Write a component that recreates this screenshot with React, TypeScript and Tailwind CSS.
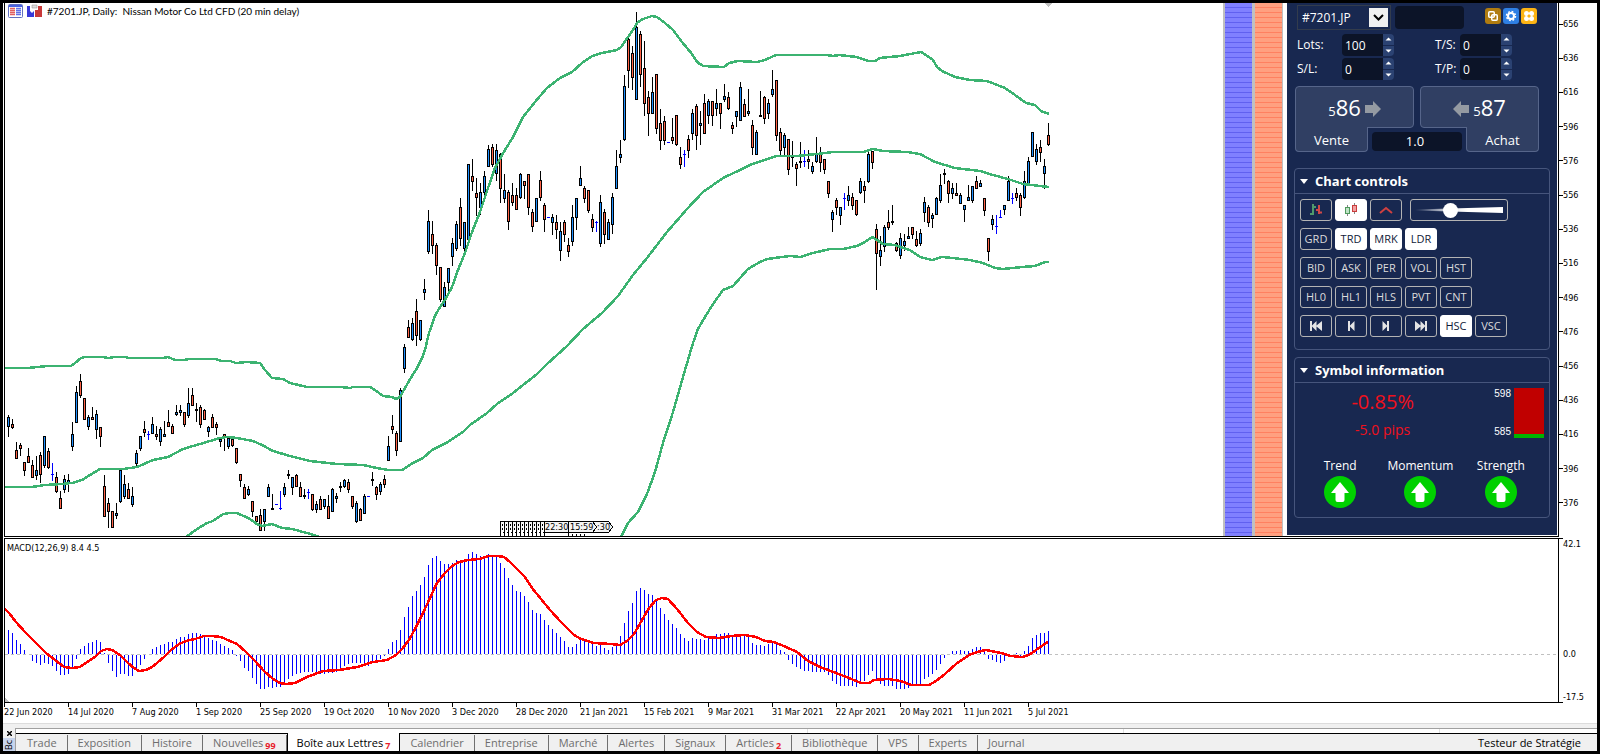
import { useState } from "react";
import type { ReactNode } from "react";

// high, body top, body bottom, low, kind (u = up, d = down, k = doji, b = no change)
const CANDLES = `
415 417 427 437 u;419 424 428 429 d;442 450 459 459 d;443 445 449 456 d;462 462 471 476 d;448 456 463 463 d;
460 465 478 478 d;456 470 476 480 u;452 455 475 483 d;436 436 466 468 u;448 451 468 469 d;463 474 475 481 b;
472 477 492 493 d;491 498 509 509 d;475 479 490 493 u;474 480 484 492 u;422 434 447 451 u;386 392 423 423 u;
374 381 396 398 d;398 398 420 420 d;415 417 427 430 u;407 417 420 420 d;410 414 430 439 u;427 427 437 447 d;
475 486 517 517 d;498 503 512 528 d;511 511 528 528 d;503 513 516 519 u;470 470 502 503 u;475 484 497 499 u;
483 489 499 499 d;487 496 505 507 u;450 453 464 468 u;436 436 449 451 u;421 429 433 437 d;431 434 435 440 b;
417 424 434 434 u;426 434 437 440 d;427 429 442 446 u;421 434 437 437 u;410 422 427 427 d;424 426 434 434 d;
405 412 415 416 u;405 410 413 416 u;412 412 425 427 d;388 403 416 418 u;388 395 406 406 d;403 409 411 422 k;
405 407 425 428 d;409 410 420 420 d;426 427 432 437 u;414 417 428 428 d;422 424 428 435 d;437 439 442 447 u;
434 434 438 451 d;437 438 447 449 u;439 439 446 447 d;448 448 463 464 d;474 474 481 487 d;484 487 499 499 d;
486 489 495 496 u;501 501 512 517 d;516 516 522 522 d;509 515 531 531 d;509 509 522 531 u;484 487 497 497 u;
494 508 510 510 k;504 504 505 505 b;491 508 509 510 b;483 487 495 497 u;470 474 476 479 k;477 477 488 495 u;
474 475 487 487 d;482 487 497 497 d;489 495 497 499 u;489 492 493 499 b;494 494 510 511 d;501 504 510 513 u;
496 499 510 510 d;499 499 507 509 u;495 506 519 519 d;488 489 512 512 u;493 496 499 503 u;482 486 488 492 k;
479 480 487 488 u;479 482 490 493 d;496 496 507 509 d;501 503 522 523 u;508 509 521 521 d;494 496 514 514 u;
496 496 497 497 b;472 479 481 486 k;486 487 495 500 d;482 484 492 495 u;475 479 485 488 d;436 446 461 461 u;
415 426 430 434 d;431 433 451 456 d;388 390 442 442 u;344 347 369 373 u;320 327 338 338 d;318 323 340 341 u;
299 311 336 346 d;320 320 340 341 u;279 289 293 300 u;210 221 252 254 u;221 234 246 254 d;243 245 266 275 d;
267 267 300 302 d;282 287 307 307 u;268 268 283 292 u;238 243 257 266 u;221 224 249 251 u;198 207 239 246 d;
222 222 249 252 u;164 164 240 240 u;159 176 182 191 d;178 193 198 216 d;183 192 208 215 u;171 176 193 199 u;
145 149 167 167 u;144 147 165 167 d;144 150 174 181 u;153 154 189 203 d;174 190 199 203 u;190 192 222 230 d;
183 195 203 206 d;188 195 210 210 d;173 174 198 199 u;181 181 186 199 d;174 174 208 215 d;209 212 227 232 d;
198 198 222 222 u;171 180 198 201 d;203 205 220 232 d;217 217 218 218 b;214 217 223 235 u;215 222 230 239 d;
222 231 251 261 u;220 222 235 242 d;238 245 252 257 d;205 217 242 246 u;198 198 218 230 u;166 178 186 186 u;
186 188 199 203 d;190 190 211 213 d;214 219 228 232 d;221 222 223 232 b;195 202 244 247 u;209 212 235 244 d;
219 222 240 240 u;193 197 225 234 u;150 166 189 189 u;140 154 158 163 u;75 86 140 141 u;37 39 71 88 d;
46 53 78 90 d;12 27 100 100 u;31 34 75 87 d;41 68 104 116 d;91 97 114 136 d;77 92 114 114 u;
74 74 129 134 d;109 123 141 150 d;116 121 141 145 d;142 142 143 143 b;118 137 141 144 d;115 115 145 146 d;
147 157 165 169 d;150 154 155 167 b;135 139 151 158 d;109 113 134 140 u;104 106 136 150 d;111 123 126 145 u;
94 103 134 134 d;99 101 116 124 u;101 101 116 126 d;89 103 109 116 u;103 103 114 129 d;84 96 100 102 u;
92 97 109 110 d;122 125 129 134 d;111 111 117 127 u;82 87 121 121 u;99 104 117 117 d;89 111 114 116 u;
120 125 148 155 d;130 132 155 155 u;91 115 117 117 k;96 97 119 124 d;99 103 114 119 u;70 89 95 97 u;
80 80 136 141 d;128 132 151 155 d;133 135 148 156 u;139 139 170 175 d;141 157 158 167 k;162 164 169 186 d;
142 161 163 168 k;150 161 162 167 b;150 159 162 169 d;162 166 172 174 u;137 154 162 163 u;147 154 163 172 d;
159 159 170 174 d;181 181 194 198 d;210 212 220 232 u;198 200 208 215 d;207 207 216 225 u;193 198 199 210 b;
186 195 201 206 u;193 197 206 210 d;200 200 215 216 d;178 181 193 194 u;181 186 191 203 d;151 154 182 183 u;
151 151 163 169 d;224 229 254 290 d;236 250 257 266 u;225 227 247 252 u;210 222 228 230 d;205 221 223 225 k;
242 243 251 252 d;233 238 256 259 u;234 241 246 251 u;227 236 239 239 u;227 227 235 239 d;231 239 246 247 d;
229 233 244 246 u;197 202 213 222 u;205 207 223 227 d;213 215 219 228 u;197 198 215 215 u;174 185 201 203 u;
169 173 175 184 k;180 181 194 203 d;183 188 194 199 u;183 193 196 196 d;193 195 204 204 u;205 205 210 222 u;
185 197 201 201 u;186 186 201 203 u;176 181 189 189 d;180 183 187 187 u;198 198 211 216 d;238 238 252 261 d;
215 219 225 230 u;215 226 227 234 b;210 217 218 218 b;205 205 210 215 u;176 181 201 201 u;193 198 199 204 b;
188 193 198 201 d;193 195 208 216 d;171 181 198 199 u;157 161 184 184 u;132 132 157 157 u;144 149 162 165 u;
140 147 153 162 d;159 166 174 189 u;123 135 145 146 d`
  .trim()
  .split(";")
  .map((row) => {
    const [high, top, bottom, low, kind] = row.trim().split(" ");
    return { high: +high, top: +top, bottom: +bottom, low: +low, kind };
  });

const UPPER_BAND =
  "5,368 28,368 47,366 71,366 75,363 81,358 85,357 103,357 108,358 115,357 125,357 129,358 163,358 168,357 175,360 183,360 190,359 215,359 222,361 230,361 236,363 247,362 260,363 265,370 272,378 283,379 290,383 307,387 340,387 350,388 353,387 370,387 375,390 383,396 392,397 396,399 400,397 405,388 412,376 417,368 422,358 425,350 429,333 435,316 440,307 445,300 452,287 458,270 465,253 472,232 480,212 488,188 495,168 502,155 513,137 523,117 535,102 547,88 560,78 572,72 582,63 592,56 602,53 617,50 621,47 628,37 633,30 637,23 643,19 652,16 657,17 665,23 673,30 682,42 692,54 697,62 703,66 724,67 729,63 738,61 757,62 765,60 776,55 827,55 833,56 839,55 857,57 868,61 875,61 880,58 900,56 921,52 933,60 937,67 942,71 955,77 970,80 987,81 1005,88 1015,95 1026,103 1035,105 1041,111 1049,114";
const MIDDLE_BAND =
  "5,487 32,487 45,485 62,484 72,483 82,480 90,475 100,469 123,469 137,467 153,460 168,457 183,449 200,444 220,438 227,437 237,438 253,441 262,445 273,451 290,456 310,461 337,464 363,465 377,468 388,470 402,470 413,463 423,458 432,450 448,442 463,432 470,425 487,413 497,404 513,393 537,374 547,364 567,346 583,329 602,313 618,296 633,275 647,258 667,232 687,209 703,192 723,178 740,170 752,164 777,156 797,156 817,154 833,152 863,152 873,149 883,151 907,152 920,154 935,162 955,168 980,171 993,175 1008,179 1023,184 1049,187";
const LOWER_BAND =
  "186,537 197,529 207,523 213,521 223,514 230,513 237,513 248,518 257,524 262,526 272,524 282,528 292,529 307,533 320,537";
const LOWER_BAND_2 =
  "621,537 628,523 638,512 647,494 655,472 663,443 673,412 685,370 693,343 698,329 705,317 713,304 723,290 733,286 748,269 760,262 767,259 782,257 790,256 800,257 813,253 830,249 843,249 857,246 865,242 872,237 877,240 883,244 895,245 900,247 910,250 920,257 932,260 942,257 953,258 970,260 983,263 995,268 1003,269 1022,267 1035,266 1045,262 1049,262";

const MACD = [
  24, 21, 14, 10, 4, 0, -6, -8, -10, -8, -9, -11, -16, -20, -20, -19, -12, -4, 5, 8, 11, 12, 14, 12, 1, -8, -16, -22,
  -19, -19, -21, -21, -16, -10, -4, 0, 5, 7, 9, 10, 12, 12, 15, 17, 17, 20, 21, 21, 20, 18, 16, 14, 13, 10, 8, 6, 4,
  -1, -6, -13, -16, -23, -29, -34, -34, -32, -33, -32, -32, -29, -24, -21, -19, -18, -17, -17, -17, -18, -19, -19, -18,
  -18, -17, -14, -11, -9, -8, -8, -8, -10, -11, -6, -5, -4, -1, 5, 12, 14, 24, 37, 47, 58, 63, 69, 77, 89, 96, 98, 93,
  90, 90, 91, 94, 94, 93, 100, 102, 100, 98, 98, 100, 99, 98, 91, 86, 76, 69, 63, 62, 58, 52, 44, 41, 40, 34, 29, 25,
  21, 17, 13, 7, 7, 10, 14, 13, 12, 11, 8, 10, 6, 4, 7, 11, 18, 31, 43, 51, 63, 66, 64, 60, 59, 53, 46, 40, 34, 30, 26,
  20, 16, 13, 16, 15, 15, 14, 17, 18, 20, 20, 21, 21, 18, 18, 19, 19, 18, 11, 9, 9, 8, 10, 12, 10, 4, 2, -5, -9, -12,
  -14, -16, -16, -17, -17, -17, -17, -20, -26, -29, -31, -31, -31, -31, -32, -29, -26, -20, -16, -24, -29, -31, -31,
  -31, -34, -34, -34, -33, -31, -31, -30, -24, -22, -19, -15, -9, -3, 0, 3, 3, 4, 3, 3, 5, 7, 7, 5, -4, -5, -7, -8, -6,
  -1, -1, 1, -1, 3, 8, 16, 19, 21, 21, 23,
];

const SIGNAL =
  "5,609 9,613 16,622 25,632 36,643 46,653 55,660 64,667 72,668 80,667 87,662 95,657 101,651 107,649 112,650 120,655 127,662 134,668 139,671 146,670 152,667 157,663 164,657 171,650 179,644 186,641 195,639 204,636 212,636 221,637 230,641 237,644 246,652 255,661 264,671 273,679 280,683 286,684 295,683 307,677 323,671 339,670 357,667 373,662 387,660 396,655 402,649 409,640 416,627 423,613 430,598 437,583 445,573 452,566 459,562 468,560 479,559 489,556 498,556 504,557 511,563 518,570 525,577 532,588 541,599 550,610 561,622 574,635 581,639 594,643 611,644 620,645 627,641 634,634 642,620 649,608 656,600 662,598 668,599 677,609 688,623 697,632 706,637 719,638 731,636 745,635 756,637 765,641 774,642 786,647 797,652 808,661 820,667 836,673 849,678 861,683 869,683 874,680 888,679 901,681 911,685 929,685 936,681 945,674 956,664 969,655 977,652 986,650 1001,653 1011,656 1022,657 1029,655 1036,650 1048,642";

const PRICES = [656, 636, 616, 596, 576, 556, 536, 516, 496, 476, 456, 436, 416, 396, 376];

const DATES = [
  "22 Jun 2020",
  "14 Jul 2020",
  "7 Aug 2020",
  "1 Sep 2020",
  "25 Sep 2020",
  "19 Oct 2020",
  "10 Nov 2020",
  "3 Dec 2020",
  "28 Dec 2020",
  "21 Jan 2021",
  "15 Feb 2021",
  "9 Mar 2021",
  "31 Mar 2021",
  "22 Apr 2021",
  "20 May 2021",
  "11 Jun 2021",
  "5 Jul 2021",
];

const TABS: { label: string; badge?: string }[] = [
  { label: "Trade" },
  { label: "Exposition" },
  { label: "Histoire" },
  { label: "Nouvelles", badge: "99" },
  { label: "Boîte aux Lettres", badge: "7" },
  { label: "Calendrier" },
  { label: "Entreprise" },
  { label: "Marché" },
  { label: "Alertes" },
  { label: "Signaux" },
  { label: "Articles", badge: "2" },
  { label: "Bibliothèque" },
  { label: "VPS" },
  { label: "Experts" },
  { label: "Journal" },
];

function PriceChart() {
  return (
    <svg className="block h-[533px] min-w-0 flex-1" shapeRendering="crispEdges" aria-label="Price chart">
      <g transform="translate(-5 -3)">
        {CANDLES.map((c, i) => {
          const x = 8 + i * 4;
          if (c.kind === "b") {
            return (
              <g key={i} fill="#0000ff">
                <rect x={x} y={c.high} width={1} height={c.low - c.high} />
                <rect x={x - 1} y={c.top} width={3} height={1} />
              </g>
            );
          }
          const h = c.bottom - c.top;
          return (
            <g key={i}>
              <rect x={x} y={c.high} width={1} height={c.low - c.high} fill="#000" />
              <rect x={x - 1} y={c.top} width={3} height={h} fill="#000" />
              {c.kind !== "k" && h > 2 && (
                <rect x={x} y={c.top + 1} width={1} height={h - 2} fill={c.kind === "u" ? "#1e90ff" : "#ff6347"} />
              )}
            </g>
          );
        })}
        <g fill="none" stroke="#3cb371" strokeWidth={2.5}>
          <polyline points={UPPER_BAND} />
          <polyline points={MIDDLE_BAND} />
          <polyline points={LOWER_BAND} />
          <polyline points={LOWER_BAND_2} />
        </g>
        <path d="M1044 3h9l-4.500 4z" fill="#c0c0c0" />

        {/* session time tags */}
        <g
          className="font-['DejaVu_Sans_Condensed',sans-serif] text-[9px]"
          fill="#f4f4f4"
          stroke="#000"
          strokeWidth={1}
        >
          {Array.from({ length: 11 }, (_, i) => (
            <path key={i} d={`M${500.5 + i * 4} 536V521.500h4`} />
          ))}
          {Array.from({ length: 11 }, (_, i) => (
            <path key={i} d={`M${502.5 + i * 4} 524v2M${502.5 + i * 4} 528v2M${502.5 + i * 4} 532h2`} />
          ))}
          <path d="M544.500 536V521.500H608.500L612.500 527L608.500 532.500H544.500" />
          <text x={545} y={530} fill="#000" stroke="none">
            22:30
          </text>
          <text x={597} y={530} fill="#000" stroke="none">
            :30
          </text>
          <path d="M568.500 536V521.500H592.500L596.500 527L592.500 532.500H568.500" />
          <text x={570} y={530} fill="#000" stroke="none">
            15:59
          </text>
          <path d="M572.500 534v3M576.500 534v3M580.500 534v3M584.500 534v3" />
        </g>
      </g>
    </svg>
  );
}

function MacdChart() {
  return (
    <svg className="block h-[163px] w-full" shapeRendering="crispEdges" aria-label="MACD">
      <line x1={0} x2="100%" y1={115.5} y2={115.5} stroke="#c0c0c0" strokeDasharray="3 3" />
      <g transform="translate(-5 -539)">
        {MACD.map((v, i) => (
          <rect key={i} x={8 + i * 4} y={v > 0 ? 654 - v : 655} width={1} height={Math.abs(v)} fill="#0000ff" />
        ))}
        <polyline points={SIGNAL} fill="none" stroke="#ff0000" strokeWidth={2.5} />
        <path d="M5 698v4h4z" fill="#c0c0c0" />
      </g>
    </svg>
  );
}

function DepthBands() {
  return (
    <div className="flex w-[60px] gap-[3px] border-l-2 border-[#c0c0c0] bg-[#c0c0c0] pr-px">
      <div className="flex-1 bg-[repeating-linear-gradient(180deg,#8080ff_0px,#8080ff_4px,#6060f0_4px,#6060f0_5px)]" />
      <div className="flex-1 bg-[repeating-linear-gradient(180deg,#ffa080_0px,#ffa080_4px,#ff8060_4px,#ff8060_5px)]" />
    </div>
  );
}

function NumberField({ label, value }: { label: string; value: string }) {
  const [text, setText] = useState(value);
  const step = (by: number) => setText(String(Math.max(0, Number(text) + by)));
  return (
    <label className="flex h-[22px] items-center text-xs">
      <span className="w-[45px] group-last:w-[25px]">{label}</span>
      <span className="flex h-full overflow-hidden rounded">
        <input
          value={text}
          onChange={(e) => setText(e.target.value)}
          className="h-full w-[41px] bg-[#0c1428] pl-[3px] text-xs text-white outline-none"
        />
        <span className="flex w-[11px] flex-col gap-px">
          <button
            type="button"
            aria-label="Increase"
            onClick={() => step(1)}
            className="flex flex-1 items-center justify-center bg-[#2b4272]"
          >
            <svg width="7" height="4" viewBox="0 0 7 4" fill="#fff">
              <path d="M.5 3.500 3.500.5l3 3z" />
            </svg>
          </button>
          <button
            type="button"
            aria-label="Decrease"
            onClick={() => step(-1)}
            className="flex flex-1 items-center justify-center bg-[#2b4272]"
          >
            <svg width="7" height="4" viewBox="0 0 7 4" fill="#fff">
              <path d="M.5.5h6l-3 3z" />
            </svg>
          </button>
        </span>
      </span>
    </label>
  );
}

function ArrowIcon({ left }: { left?: boolean }) {
  return (
    <svg className="mt-1" width="16" height="16" viewBox="0 0 16 16" fill="#949aa2">
      {left ? <path d="M0 8 8 0v4h8v8H8v4z" /> : <path d="M16 8 8 0v4H0v8h8v4z" />}
    </svg>
  );
}

function TradeBox() {
  return (
    <div className="relative mt-[6px] ml-[1px] flex gap-[6px]">
      <button type="button" className="flex w-[119px] flex-col text-left">
        <span className="flex h-[42px] w-full items-center justify-center gap-1 rounded-t rounded-br border border-[#56658a] bg-[#303f63]">
          <span className="text-[22px] leading-none">
            <span className="text-[13px]">5</span>86
          </span>
          <ArrowIcon />
        </span>
        <span className="-mt-px flex h-[25px] w-[73px] justify-center rounded-b border border-t-0 border-[#56658a] bg-[#303f63] pt-[4px] text-[13px] leading-[18px]">
          Vente
        </span>
      </button>
      <button type="button" className="flex w-[119px] flex-col items-end text-left">
        <span className="flex h-[42px] w-full items-center justify-center gap-1 rounded-t rounded-bl border border-[#56658a] bg-[#303f63]">
          <ArrowIcon left />
          <span className="text-[22px] leading-none">
            <span className="text-[13px]">5</span>87
          </span>
        </span>
        <span className="-mt-px flex h-[25px] w-[73px] justify-center rounded-b border border-t-0 border-[#56658a] bg-[#303f63] pt-[4px] text-[13px] leading-[18px]">
          Achat
        </span>
      </button>
      <input
        aria-label="Volume"
        defaultValue="1.0"
        className="absolute bottom-[1px] left-[77px] h-[19px] w-[90px] rounded bg-[#0c1428] pr-1 text-center text-[13px] text-white outline-none"
      />
    </div>
  );
}

function Group({ title, children }: { title: string; children: ReactNode }) {
  return (
    <section className="rounded border border-[#46557c]">
      <h2 className="flex h-[25px] items-center gap-[7px] border-b border-[#46557c] pt-px pl-[5px] text-[13px] font-bold">
        <svg width="8" height="5" viewBox="0 0 8 5" fill="#fff">
          <path d="M0 0h8L4 5z" />
        </svg>
        {title}
      </h2>
      {children}
    </section>
  );
}

function KeyButton({ on, label, children }: { on?: boolean; label?: string; children: ReactNode }) {
  return (
    <button
      type="button"
      aria-label={label}
      aria-pressed={!!on}
      className={
        "flex h-[22px] w-8 items-center justify-center rounded-[3px] border text-[11px] " +
        (on ? "border-white bg-white text-[#101a38]" : "border-[#b4b4b4] text-[#dcdcdc]")
      }
    >
      {children}
    </button>
  );
}

function SkipIcon({ kind }: { kind: "first" | "prev" | "next" | "last" }) {
  const flip = kind === "next" || kind === "last";
  const double = kind === "first" || kind === "last";
  return (
    <svg width="12" height="10" viewBox="0 0 12 10" fill="#e4e4e4">
      <g transform={flip ? "translate(12 0) scale(-1 1)" : undefined}>
        {double ? (
          <path d="M0 0h2v4.500L6.500 0v4.500L12 0v10L6.500 5.500V10L2 5.500V10H0z" />
        ) : (
          <path d="M3 0h2v4.500L9.500 0v10L5 5.500V10H3z" />
        )}
      </g>
    </svg>
  );
}

const KEY_ROWS = [
  ["GRD", "TRD", "MRK", "LDR"],
  ["BID", "ASK", "PER", "VOL", "HST"],
  ["HL0", "HL1", "HLS", "PVT", "CNT"],
];
const ACTIVE_KEYS = ["TRD", "MRK", "LDR"];

function ChartControls() {
  return (
    <Group title="Chart controls">
      <div className="flex flex-col gap-[7px] px-[5px] pt-[5px] pb-3">
        <div className="flex gap-[3px]">
          <KeyButton label="Bars">
            <svg width="14" height="14" viewBox="0 0 14 14" fill="none" strokeWidth="2">
              <path d="M4 1v11M4 4h3M1 11h3" stroke="#4f9a6c" />
              <path d="M10 2v9M7 7h3M10 9.500h3" stroke="#d04848" />
            </svg>
          </KeyButton>
          <KeyButton on label="Candles">
            <svg width="14" height="14" viewBox="0 0 14 14">
              <path d="M3.500 2v11M10.500 0v11" stroke="#333" strokeOpacity=".6" />
              <rect x="1.500" y="4.500" width="4" height="6" fill="#bfe3c6" stroke="#4f9a5c" />
              <rect x="8.500" y="2.500" width="4" height="6" fill="#f3a0a0" stroke="#c83c3c" />
            </svg>
          </KeyButton>
          <KeyButton label="Line">
            <svg width="14" height="8" viewBox="0 0 14 8" fill="none">
              <path d="M1 7l6-5 6 5" stroke="#d04040" strokeWidth="2" />
            </svg>
          </KeyButton>
          <div className="relative ml-[5px] flex h-[22px] w-[98px] items-center rounded-[3px] border border-[#b4b4b4] px-1">
            <svg className="absolute left-1 h-[6px] w-[88px]" viewBox="0 0 88 6" preserveAspectRatio="none">
              <defs>
                <linearGradient id="wedge">
                  <stop offset="0" stopColor="#fff" stopOpacity="0" />
                  <stop offset=".4" stopColor="#fff" stopOpacity=".9" />
                  <stop offset=".6" stopColor="#fff" />
                </linearGradient>
              </defs>
              <path d="M0 2.500 88 0v6L0 3.500z" fill="url(#wedge)" />
            </svg>
            <input
              type="range"
              aria-label="Zoom"
              defaultValue={38}
              className="relative h-[14px] w-full appearance-none bg-transparent [&::-webkit-slider-thumb]:size-[15px] [&::-webkit-slider-thumb]:appearance-none [&::-webkit-slider-thumb]:rounded-full [&::-webkit-slider-thumb]:bg-white"
            />
          </div>
        </div>
        {KEY_ROWS.map((row) => (
          <div key={row[0]} className="flex gap-[3px]">
            {row.map((k) => (
              <KeyButton key={k} on={ACTIVE_KEYS.includes(k)}>
                {k}
              </KeyButton>
            ))}
          </div>
        ))}
        <div className="flex gap-[3px]">
          <KeyButton label="First">
            <SkipIcon kind="first" />
          </KeyButton>
          <KeyButton label="Previous">
            <SkipIcon kind="prev" />
          </KeyButton>
          <KeyButton label="Next">
            <SkipIcon kind="next" />
          </KeyButton>
          <KeyButton label="Last">
            <SkipIcon kind="last" />
          </KeyButton>
          <KeyButton on>HSC</KeyButton>
          <KeyButton>VSC</KeyButton>
        </div>
      </div>
    </Group>
  );
}

function SymbolInformation() {
  return (
    <Group title="Symbol information">
      <div className="flex h-[60px] items-start pt-[5px] pr-[5px]">
        <div className="flex-1 pr-6 text-center text-[#f0101c]">
          <p className="text-xl leading-[28px]">-0.85%</p>
          <p className="text-sm leading-[28px]">-5.0 pips</p>
        </div>
        <div className="flex h-[50px] gap-[3px]">
          <div className="flex flex-col justify-between font-['Liberation_Sans',sans-serif] text-[10px] leading-[12px]">
            <span>598</span>
            <span>585</span>
          </div>
          <div className="flex w-[30px] flex-col">
            <div className="flex-1 bg-[#c00000]" />
            <div className="h-1 bg-[#00b400]" />
          </div>
        </div>
      </div>
      <div className="flex pt-[14px] pr-[8px] pb-[9px] pl-[5px] text-xs">
        {["Trend", "Momentum", "Strength"].map((name) => (
          <div key={name} className="flex flex-1 flex-col items-center gap-[2px]">
            <span className="leading-[17px]">{name}</span>
            <svg width="32" height="32" viewBox="0 0 32 32">
              <circle cx="16" cy="16" r="16" fill="#00d000" />
              <path d="M16 6 25 17h-4.500v7a2 2 0 0 1-2 2h-5a2 2 0 0 1-2-2v-7H7z" fill="#fff" strokeLinejoin="round" />
            </svg>
          </div>
        ))}
      </div>
    </Group>
  );
}

function TradePanel() {
  return (
    <aside className="mr-px mb-px ml-1 w-[270px] bg-[#182850] px-[7px] pt-[2px] font-['Open_Sans',sans-serif] text-white">
      <div className="flex h-[25px] items-center pl-[3px]">
        <div className="relative flex h-full w-[94px] items-center border border-[#333c4c]">
          <select
            aria-label="Symbol"
            className="h-full w-full appearance-none bg-transparent pl-1 text-xs text-white outline-none"
          >
            <option>#7201.JP</option>
          </select>
          <span className="pointer-events-none absolute right-[2px] flex size-[19px] items-center justify-center bg-[#f0f0f0]">
            <svg width="11" height="7" viewBox="0 0 11 7" fill="none" stroke="#000" strokeWidth="2">
              <path d="M1 1l4.500 4.500L10 1" />
            </svg>
          </span>
        </div>
        <input aria-label="Comment" className="ml-1 h-[23px] w-[69px] rounded bg-[#0c1428] px-1 text-xs outline-none" />
        <div className="ml-auto flex gap-[2px] self-start pt-[3px] pr-[13px]">
          <button type="button" aria-label="Copy" className="size-4 rounded-[3px] bg-[#b07c10]">
            <svg viewBox="0 0 16 16" fill="none" stroke="#fff" strokeWidth="1.500">
              <rect x="3.750" y="3.750" width="5.500" height="5.500" rx="1" />
              <rect x="6.750" y="6.750" width="5.500" height="5.500" rx="1" />
            </svg>
          </button>
          <button type="button" aria-label="Settings" className="size-4 rounded-[3px] bg-[#2f80e4]">
            <svg viewBox="0 0 16 16" fill="none" stroke="#fff">
              <circle cx="8" cy="8" r="3" strokeWidth="2" />
              <circle cx="8" cy="8" r="4.500" strokeWidth="1.500" strokeDasharray="1.800 1.734" />
            </svg>
          </button>
          <button type="button" aria-label="Layout" className="size-4 rounded-[3px] bg-[#fcb414]">
            <svg viewBox="0 0 16 16" fill="#fff">
              <circle cx="5.500" cy="5.500" r="2.500" />
              <circle cx="10.500" cy="5.500" r="2.500" />
              <circle cx="5.500" cy="10.500" r="2.500" />
              <circle cx="10.500" cy="10.500" r="2.500" />
              <circle cx="8" cy="8" r="1.500" fill="#fcb414" />
            </svg>
          </button>
        </div>
      </div>

      <div className="mt-1 flex gap-[41px] pl-[3px]">
        <div className="group flex flex-col gap-[2px]">
          <NumberField label="Lots:" value="100" />
          <NumberField label="S/L:" value="0" />
        </div>
        <div className="group flex flex-col gap-[2px]">
          <NumberField label="T/S:" value="0" />
          <NumberField label="T/P:" value="0" />
        </div>
      </div>

      <TradeBox />

      <div className="mt-4 flex flex-col gap-[7px]">
        <ChartControls />
        <SymbolInformation />
      </div>
    </aside>
  );
}

function TitleBar() {
  return (
    <div className="absolute top-0 left-[3px] flex h-4 items-center gap-1">
      <svg width="15" height="14" viewBox="0 0 15 14">
        <rect x=".5" y=".5" width="14" height="13" rx="1" fill="#fff" stroke="#6070c0" />
        <path d="M1 2h13" stroke="#4a62e0" strokeWidth="2" />
        <path d="M2 4.500h5M2 6.500h5M2 8.500h5M2 10.500h5" stroke="#e06060" strokeWidth="1.500" />
        <path d="M8 4.500h5M8 6.500h5M8 8.500h5M8 10.500h5" stroke="#6070e8" strokeWidth="1.500" />
      </svg>
      <svg width="15" height="14" viewBox="0 0 15 14">
        <path d="M0 2h3v5l2 2 2-2v6H0z" fill="#3838d8" />
        <path d="M15 2h-4v4H8v7h7z" fill="#c83838" />
        <path d="M5 1h5v3H5z" fill="#ddd" stroke="#888" strokeWidth=".5" />
      </svg>
      <h1 className="pl-px font-['Lato',sans-serif] text-[10px] whitespace-pre">
        #7201.JP, Daily:  Nissan Motor Co Ltd CFD (20 min delay)
      </h1>
    </div>
  );
}

function AxisLabel({ children }: { children: ReactNode }) {
  return (
    <div className="flex h-3 items-center">
      <span className="h-px w-1 bg-black" />
      <span className="leading-3">{children}</span>
    </div>
  );
}

function TabStrip() {
  const [active, setActive] = useState("Boîte aux Lettres");
  return (
    <div className="flex h-[23px] font-['Open_Sans',sans-serif]">
      <div className="flex w-3 flex-col bg-[#f0f0f0]">
        <button type="button" aria-label="Close" className="flex h-[10px] items-center justify-center">
          <svg width="5" height="5" viewBox="0 0 5 5" stroke="#000" strokeWidth="1.500">
            <path d="M0 0l5 5M5 0 0 5" />
          </svg>
        </button>
        <span className="flex h-[13px] rotate-180 items-center justify-center bg-[#c8d4ec] text-[9px] leading-3 [writing-mode:vertical-rl]">
          Bc
        </span>
      </div>
      <div className="flex min-w-0 flex-1 flex-col border-t border-l border-[#a0a0a0]">
        <div className="flex h-1 bg-white">
          <span className="w-1/2" />
          <span className="w-1/5 border-l border-[#e0e0e0]" />
          <span className="w-1/5 border-l border-[#e0e0e0]" />
          <span className="flex-1 border-l border-[#e0e0e0]" />
        </div>
        <nav className="flex h-[18px] items-stretch bg-[#f0f0f0] text-[11px] leading-4">
          <span className="w-px border-t border-black" />
          {TABS.map((t, i) => {
            const on = t.label === active;
            const last = i === TABS.length - 1;
            return (
              <button
                key={t.label}
                type="button"
                onClick={() => setActive(t.label)}
                className={
                  on
                    ? "flex border-x border-black bg-white px-[9px] text-black"
                    : "flex border-t border-black pt-px text-[#6e6e6e]"
                }
              >
                <span
                  className={
                    on ? "flex pt-[2px]" : "flex h-4 px-[10px] " + (last ? "" : "border-r border-[#707070]")
                  }
                >
                  {t.label}
                  {t.badge && (
                    <span className="pt-[6px] pl-[2px] text-[9px] leading-[10px] font-bold text-[#e81c2c]">
                      {t.badge}
                    </span>
                  )}
                </span>
              </button>
            );
          })}
          <span className="flex flex-1 items-center justify-end border-t border-black pr-4 text-black">
            Testeur de Stratégie
          </span>
        </nav>
      </div>
    </div>
  );
}

export default function App() {
  return (
    <div className="min-h-screen bg-black p-[3px] font-['DejaVu_Sans_Condensed',sans-serif] text-[9px] text-black">
      <main className="bg-white">
        <div className="flex pl-px">
          <div className="flex min-w-0 flex-1 flex-col gap-px">
            <div className="relative flex border-x border-b border-black">
              <PriceChart />
              <TitleBar />
              <DepthBands />
              <TradePanel />
            </div>
            <div className="relative border border-black">
              <MacdChart />
              <span className="absolute top-[3px] left-[2px]">MACD(12,26,9) 8.4 4.5</span>
            </div>
          </div>
          <div className="flex w-[38px] flex-col">
            <div className="flex h-[535px] flex-col justify-between pt-[15px] pb-[29px]">
              {PRICES.map((p) => (
                <AxisLabel key={p}>{p}</AxisLabel>
              ))}
            </div>
            <div className="flex h-[165px] flex-col">
              <span className="h-px w-1 bg-black" />
              <span className="h-[109px] pl-1 leading-[10px]">42.1</span>
              <span className="h-[44px] pl-1 leading-3">0.0</span>
              <span className="pl-1 leading-[10px]">-17.5</span>
              <span className="mt-auto h-px w-1 bg-black" />
            </div>
          </div>
        </div>
        <div className="flex h-5 overflow-hidden pl-px">
          {DATES.map((d) => (
            <div key={d} className="w-16 shrink-0 whitespace-nowrap">
              <div className="h-[4px] w-px bg-black" />
              <span className="block leading-[10px]">{d}</span>
            </div>
          ))}
        </div>
        <div className="h-[5px] border-t border-[#dcdcdc] bg-[#f0f0f0]" />
        <TabStrip />
      </main>
    </div>
  );
}
